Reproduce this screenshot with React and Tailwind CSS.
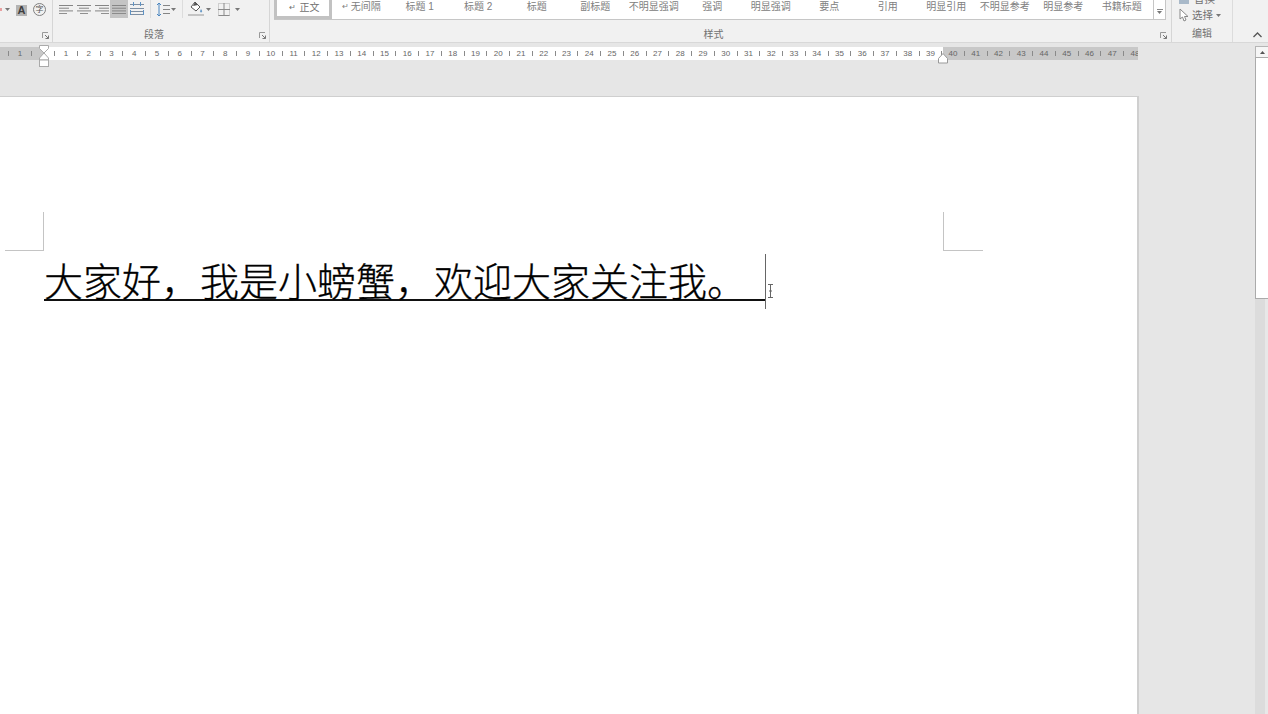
import React from 'react';

const cjk = "font-['Liberation_Sans','Noto_Sans_CJK_SC',sans-serif]";
const styles = ['无间隔', '标题 1', '标题 2', '标题', '副标题', '不明显强调', '强调', '明显强调', '要点', '引用', '明显引用', '不明显参考', '明显参考', '书籍标题'];

function Caret({ className = '' }) {
  return (
    <svg width="5" height="3" viewBox="0 0 5 3" className={className}>
      <path d="M0 0h5L2.5 3z" fill="#777" />
    </svg>
  );
}

function Launcher({ className = '' }) {
  return (
    <svg width="7" height="7" viewBox="0 0 7 7" className={className}>
      <path d="M0.5 6V0.5H6" fill="none" stroke="#999" />
      <path d="M3 3l3.5 3.5M6.5 3.5v3h-3" fill="none" stroke="#777" />
    </svg>
  );
}

function Lines({ widths, anchor }) {
  return (
    <svg width="14" height="9" viewBox="0 0 14 9">
      {widths.map((w, i) => {
        const x = anchor === 'left' ? 0 : anchor === 'right' ? 14 - w : (14 - w) / 2;
        return <rect key={i} x={x} y={i * 2.7} width={w} height="1" fill="#858585" />;
      })}
    </svg>
  );
}

function RulerMark({ value }) {
  return (
    <div className="w-[11.375px] shrink-0 flex justify-center items-center">
      {value ? (
        <span className="text-[8px] leading-none text-[#666] font-['Liberation_Sans',sans-serif]">{value}</span>
      ) : (
        <span className="block w-px h-[5px] bg-[#8a8a8a]" />
      )}
    </div>
  );
}

function Marks({ from, to }) {
  const marks = [];
  for (let n = from; n <= to; n++) {
    marks.push(<RulerMark key={`n${n}`} value={n} />);
    marks.push(<RulerMark key={`t${n}`} />);
  }
  return marks;
}

function Ruler() {
  return (
    <div className="relative flex w-[1138px] h-[13px] shrink-0">
      <div className="w-[44px] bg-[#c8c8c8] flex items-center pl-[3px]">
        <RulerMark />
        <RulerMark value={1} />
        <RulerMark />
      </div>
      <div className="w-[899px] bg-white flex items-center pl-[5px]">
        <RulerMark />
        <Marks from={1} to={39} />
      </div>
      <div className="w-[195px] bg-[#c8c8c8] flex items-center pl-[4.3px] overflow-hidden">
        <Marks from={40} to={48} />
      </div>
      <svg width="12" height="23" viewBox="0 0 12 23" className="absolute left-[38px] top-[-2px]">
        <path d="M1.5 .5h9v3L6 8 1.5 3.500z" fill="#fff" stroke="#aaa" />
        <path d="M6 8l4.500 5v2h-9v-2z" fill="#fff" stroke="#aaa" />
        <rect x="1.500" y="15" width="9" height="6.500" fill="#fff" stroke="#aaa" />
      </svg>
      <svg width="12" height="11" viewBox="0 0 12 11" className="absolute left-[937px] top-[6px]">
        <path d="M6 .5l4.500 5v4.500h-9V5.500z" fill="#fff" stroke="#999" />
      </svg>
    </div>
  );
}

function FontGroup() {
  return (
    <div className="w-[53px] shrink-0 relative border-r border-[#d6d6d6] flex items-start">
      <div className="flex items-center pt-[3px]">
        <span className="block w-[2px] h-[3px] bg-[#e8a0a0]" />
        <Caret className="ml-[3px]" />
        <span className="ml-[6px] mt-[1px] w-[11px] h-[11px] bg-[#b4b4b4] flex items-center justify-center text-[11px] leading-none font-bold text-[#3f3f3f] font-['Liberation_Sans',sans-serif]">A</span>
        <span className={`ml-[6px] w-[13px] h-[13px] rounded-full border border-[#808080] flex items-center justify-center text-[8px] leading-none text-[#555] ${cjk}`}>字</span>
      </div>
      <Launcher className="absolute right-[3px] top-[32px]" />
    </div>
  );
}

function ParagraphGroup() {
  return (
    <div className="w-[217px] shrink-0 relative border-r border-[#d6d6d6] flex flex-col">
      <div className="flex items-start h-[19px] pl-[6px]">
        <div className="flex items-center h-[18px] gap-[4px]">
          <Lines widths={[14, 10, 14, 8]} anchor="left" />
          <Lines widths={[14, 10, 14, 8]} anchor="center" />
          <Lines widths={[14, 10, 14, 8]} anchor="right" />
        </div>
        <div className="ml-[1px] w-[18px] h-[18px] bg-[#c4c4c4] flex items-center justify-center">
          <Lines widths={[14, 14, 14, 14]} anchor="left" />
        </div>
        <div className="ml-[2px] h-[18px] flex items-center">
          <svg width="14" height="14" viewBox="0 0 14 14">
            <path d="M0 2.500h14M0 6.500h14M0 9.500h14M0 12.500h14" stroke="#7d8fa3" />
            <path d="M3.500 0v4M10.500 0v4M.5 8v5M13.500 8v5" stroke="#5e93c5" />
          </svg>
        </div>
        <span className="ml-[6px] w-px h-[18px] bg-[#dcdcdc]" />
        <div className="ml-[5px] h-[18px] flex items-center">
          <svg width="14" height="15" viewBox="0 0 14 15">
            <path d="M3 1v13M1 3l2-2 2 2M1 12l2 2 2-2" fill="none" stroke="#4a86c0" />
            <path d="M7 3.500h7M7 7.500h7M7 11.500h7" stroke="#858585" />
          </svg>
          <Caret className="ml-px" />
        </div>
        <span className="ml-[6px] w-px h-[18px] bg-[#dcdcdc]" />
        <div className="ml-[5px] h-[18px] flex items-center">
          <svg width="16" height="16" viewBox="0 0 16 16">
            <path d="M7 1l5 5-4 4-5-4z" fill="#fff" stroke="#555" />
            <path d="M5 5l2-4 3 3z" fill="#555" />
            <path d="M13 8c1 1.500 1.500 2 1 3-.5.600-1.500.500-1.800 0-.3-1 .3-2 .8-3z" fill="#6a9bc8" />
            <rect x="0" y="13" width="16" height="2" fill="#c4c4c4" />
          </svg>
          <Caret className="ml-[2px]" />
        </div>
        <div className="ml-[7px] h-[18px] flex items-center">
          <svg width="12" height="13" viewBox="0 0 12 13">
            <path d="M.5.5h11v12H.5z" fill="none" stroke="#aaa" strokeDasharray="1 1" />
            <path d="M6 0v13M0 6.500h12" stroke="#8a8a8a" />
            <path d="M.5 12.500h11" stroke="#8a8a8a" />
          </svg>
          <Caret className="ml-[5px]" />
        </div>
      </div>
      <div className={`mt-[8px] pr-[14px] pt-px text-center text-[10px] leading-[14px] text-[#707070] ${cjk}`}>段落</div>
      <Launcher className="absolute right-[3px] top-[32px]" />
    </div>
  );
}

function StylesGroup() {
  return (
    <div className="w-[902px] shrink-0 relative border-r border-[#d6d6d6] flex flex-col pl-[4px]">
      <div className="flex h-[20px] items-start">
        <div className="flex w-[879px] h-[20px] bg-white border-b border-[#c6c6c6]">
          <div className={`w-[58px] h-[19px] shrink-0 bg-white border-[3px] border-t-0 border-[#c2c2c2] flex items-center justify-center gap-[4px] pl-[2px] text-[10px] leading-none text-[#707070] ${cjk}`}>
            <span className="text-[8px]">↵</span>
            <span>正文</span>
          </div>
          {styles.map((s, i) => (
            <div key={s} className={`w-[58.500px] shrink-0 h-[14px] flex items-center justify-center gap-[2px] text-[10px] leading-none text-[#808080] ${cjk}`}>
              {i === 0 && <span className="text-[8px]">↵</span>}
              {s}
            </div>
          ))}
        </div>
        <div className="w-[13px] h-[20px] bg-white border-x border-b border-[#c6c6c6] flex flex-col items-center justify-center gap-[1px] pt-[4px]">
          <span className="block w-[6px] h-px bg-[#888]" />
          <Caret />
        </div>
      </div>
      <div className={`mt-[7px] pt-px text-center text-[10px] leading-[14px] text-[#707070] pr-[18px] ${cjk}`}>样式</div>
      <Launcher className="absolute right-[4px] top-[32px]" />
    </div>
  );
}

function EditGroup() {
  return (
    <div className="w-[61px] shrink-0 border-r border-[#dcdcdc] flex flex-col justify-end items-center overflow-hidden h-[42px] pb-px">
      <div className={`flex items-center text-[10.500px] leading-[16px] text-[#707070] w-full pl-[7px] ${cjk}`}>
        <span className="block w-[10px] h-[10px] bg-[#a9b9c9]" />
        <span className="ml-[5px]">替换</span>
      </div>
      <div className={`flex items-center text-[10.500px] leading-[16px] text-[#707070] w-full pl-[7px] ${cjk}`}>
        <svg width="10" height="14" viewBox="0 0 10 14">
          <path d="M1 1v10l2.500-2 1.500 4 2-1-1.500-3.500H9z" fill="#fff" stroke="#888" />
        </svg>
        <span className="ml-[3px]">选择</span>
        <Caret className="ml-[3px]" />
      </div>
      <div className={`mt-[4px] text-[10px] leading-[14px] text-[#707070] ${cjk}`}>编辑</div>
    </div>
  );
}

function Scrollbar() {
  return (
    <div className="w-[13px] shrink-0 flex flex-col pt-[3px]">
      <div className="h-[11px] shrink-0 bg-[#f6f6f6] border-l border-t border-[#b5b5b5] flex items-center justify-center">
        <svg width="5" height="3" viewBox="0 0 5 3"><path d="M0 3h5L2.500 0z" fill="#555" /></svg>
      </div>
      <div className="h-[242px] shrink-0 bg-white border-l border-y border-[#ababab]" />
      <div className="flex-1 bg-[#dcdcdc] border-r-[3px] border-[#e8e8e8]" />
    </div>
  );
}

export default function App() {
  return (
    <div className="w-[1268px] h-[714px] overflow-hidden flex flex-col bg-[#e6e6e6]">
      <div className="h-[43px] shrink-0 bg-[#f1f1f1] border-b border-[#d8d8d8] flex">
        <FontGroup />
        <ParagraphGroup />
        <StylesGroup />
        <EditGroup />
        <div className="flex-1 flex items-end justify-end pb-[4px] pr-[6px]">
          <svg width="9" height="6" viewBox="0 0 9 6"><path d="M.5 5L4.500 1l4 4" fill="none" stroke="#555" strokeWidth="1.300" /></svg>
        </div>
      </div>
      <div className="flex-1 flex min-h-0">
        <div className="w-[1255px] shrink-0 flex flex-col pt-[4px] overflow-hidden">
          <Ruler />
          <div className="mt-[36px] w-[1139px] flex-1 bg-white border-t border-r-2 border-[#cfcfcf] pt-[115px]">
            <div className="flex h-[39px]">
              <div className="ml-[5px] w-[39px] border-r border-b border-[#c4c4c4]" />
              <div className="ml-[899px] w-[40px] border-l border-b border-[#c4c4c4]" />
            </div>
            <div className="relative ml-[44px] mt-[3px] w-[722px] h-[57px]">
              <div className="h-[47px] w-[721px] border-b-2 border-[#111] text-[39px] leading-[50px] text-black font-light [-webkit-text-stroke:0.3px_#000] font-['Noto_Sans_CJK_SC',sans-serif] whitespace-nowrap">
                大家好，我是小螃蟹，欢迎大家关注我。
              </div>
              <span className="absolute left-[721px] top-0 w-px h-[55px] bg-[#666]" />
              <svg width="7" height="14" viewBox="0 0 7 14" className="absolute left-[723px] top-[30px]">
                <path d="M1 .5h5M3.500.5v13M1 13.500h5M2 7h3" fill="none" stroke="#666" />
              </svg>
            </div>
          </div>
        </div>
        <Scrollbar />
      </div>
    </div>
  );
}
